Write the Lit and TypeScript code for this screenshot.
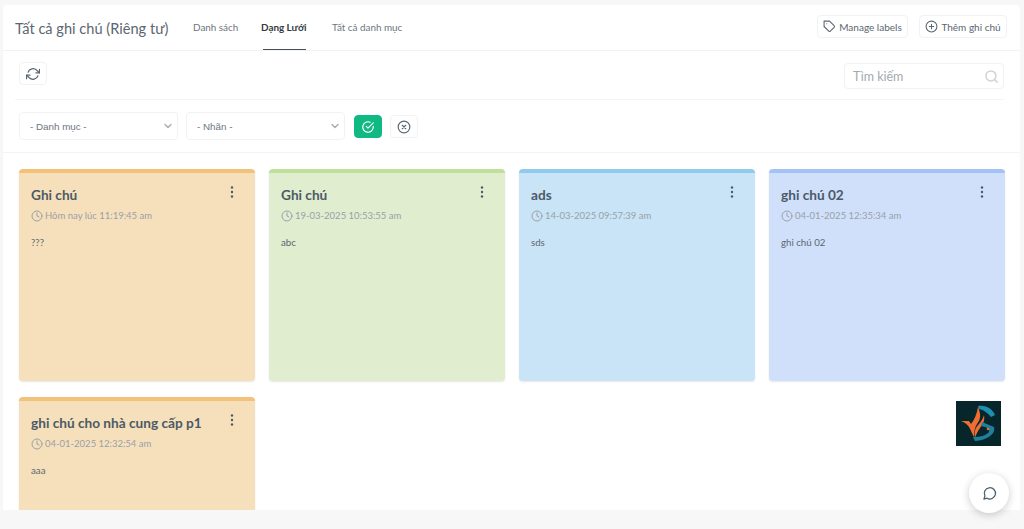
import { LitElement, html, css } from "lit";
import { customElement } from "lit/decorators.js";

const notes = [
  { t: "Ghi chú", d: "Hôm nay lúc 11:19:45 am", b: "???", c: "orange" },
  { t: "Ghi chú", d: "19-03-2025 10:53:55 am", b: "abc", c: "green" },
  { t: "ads", d: "14-03-2025 09:57:39 am", b: "sds", c: "sky" },
  { t: "ghi chú 02", d: "04-01-2025 12:35:34 am", b: "ghi chú 02", c: "blue" },
  { t: "ghi chú cho nhà cung cấp p1", d: "04-01-2025 12:32:54 am", b: "aaa", c: "orange" },
];

const clock = html`<svg class="clock" viewBox="0 0 24 24" fill="none" stroke="currentColor" stroke-width="2" stroke-linecap="round" stroke-linejoin="round"><circle cx="12" cy="12" r="10"></circle><path d="M12 6v6l4 2"></path></svg>`;
const chevron = html`<svg class="chev" viewBox="0 0 12 12" fill="none" stroke="#a3a9af" stroke-width="1.3" stroke-linecap="round" stroke-linejoin="round"><path d="M3 4.5 6 7.5l3-3"></path></svg>`;

@customElement("app-root")
export class AppRoot extends LitElement {
  static styles = css`
    :host { display: block; height: 529px; background: #f7f7f8; padding: 5px 4px 0 3px; box-sizing: border-box; overflow: hidden; position: relative; font-family: Lato, "Noto Sans", sans-serif; color: #495057; }
    .panel { background: #fff; height: 505px; overflow: hidden; border-radius: 4px 4px 0 0; }
    .head { height: 45px; box-sizing: content-box; border-bottom: 1px solid #f1f2f3; display: flex; align-items: stretch; padding: 0 13px 0 12px; }
    .title { font-size: 14.6px; line-height: 20px; color: #5b6670; margin-top: 14px; width: 166px; white-space: nowrap; }
    .tabs { display: flex; margin-left: 12px; }
    .tab { font-size: 9.9px; color: #6c757d; line-height: 14px; padding-top: 15px; height: 45px; box-sizing: border-box; white-space: nowrap; }
    .tab.one { width: 68px; }
    .tab.two { width: 71px; }
    .tab.on span { display: block; color: #343a40; font-weight: 700; }
    .tab.on { position: relative; }
    .tab.on::after { content: ""; position: absolute; left: 2px; width: 43px; top: 44px; height: 1px; background: #495057; }
    .actions { margin-left: auto; display: flex; gap: 11px; padding-top: 10px; }
    .btn { border: 1px solid #f1f2f3; border-radius: 4px; background: #fff; display: flex; align-items: center; justify-content: center; box-sizing: border-box; color: #5b6670; }
    .act { height: 23px; font-size: 10px; gap: 3px; white-space: nowrap; }
    .act.a { width: 91px; }
    .act.b { width: 88px; }
    .act svg { width: 13px; height: 13px; }
    .bar { margin: 0 16px 0 12px; }
    .row1 { height: 49px; box-sizing: border-box; border-bottom: 1px solid #f3f4f5; display: flex; justify-content: space-between; align-items: flex-start; padding-left: 4px; }
    .refresh { width: 28px; height: 23px; margin-top: 11px; }
    .refresh svg { width: 14px; height: 14px; }
    .search { width: 160px; height: 26px; margin-top: 12px; border: 1px solid #f1f2f3; border-radius: 4px; box-sizing: border-box; display: flex; align-items: center; justify-content: space-between; padding: 0 4px 0 8px; font-size: 12.5px; color: #a3a9af; }
    .search svg { width: 15px; height: 15px; }
    .row2 { height: 53px; box-sizing: border-box; border-bottom: 1px solid #f3f4f5; display: flex; align-items: flex-start; padding: 12px 0 0 16px; gap: 8px; }
    .select { width: 159px; height: 28px; border: 1px solid #f1f2f3; border-radius: 4px; box-sizing: border-box; display: flex; align-items: center; justify-content: space-between; padding: 0 3px 0 10px; font-size: 9.8px; color: #6c757d; font-family: "Liberation Sans", sans-serif; }
    .chev { width: 12px; height: 12px; }
    .ok, .cancel { width: 28px; height: 23px; margin-top: 3px; }
    .ok { background: #10b981; border-color: #10b981; color: #fff; margin-left: 1px; }
    .cancel { color: #5b6670; }
    .ok svg, .cancel svg { width: 14px; height: 14px; }
    .grid { display: grid; grid-template-columns: repeat(4, 236px); grid-auto-rows: 212px; gap: 16px 14px; padding: 16px 0 0 16px; }
    .note { border-top: 4px solid; border-radius: 4px; box-sizing: border-box; padding: 12px 12px 0; box-shadow: 0 1px 2px rgba(0, 0, 0, 0.1); position: relative; }
    .orange { background: #f6e0bb; border-color: #f3c27a; }
    .green { background: #e0edcf; border-color: #bfe09b; }
    .sky { background: #c9e4f7; border-color: #90cbee; }
    .blue { background: #d0e0fa; border-color: #a3c3f6; }
    .nt { font-size: 13.65px; font-weight: 700; line-height: 20px; color: #4c5a67; white-space: nowrap; }
    .dots { position: absolute; top: 13px; right: 17px; width: 12px; height: 12px; }
    .date { display: flex; align-items: center; gap: 2px; font-size: 9.5px; line-height: 14px; color: #98a1a8; margin-top: 4px; white-space: nowrap; }
    .clock { width: 12px; height: 12px; }
    .body { font-size: 9.7px; line-height: 14px; color: #5b6670; margin-top: 12px; }
    .logo { position: absolute; left: 956px; top: 401px; width: 45px; height: 45px; }
    .chat { position: absolute; left: 969px; top: 473px; width: 40px; height: 40px; border-radius: 50%; background: #fff; box-shadow: 0 2px 8px rgba(0, 0, 0, 0.2); display: flex; align-items: center; justify-content: center; color: #495f6e; }
    .chat svg { width: 15px; height: 15px; }
  `;

  render() {
    return html`
      <div class="panel">
        <div class="head">
          <div class="title">Tất cả ghi chú (Riêng tư)</div>
          <div class="tabs">
            <div class="tab one">Danh sách</div>
            <div class="tab two on"><span>Dạng Lưới</span></div>
            <div class="tab">Tất cả danh mục</div>
          </div>
          <div class="actions">
            <div class="btn act a"><svg viewBox="0 0 24 24" fill="none" stroke="currentColor" stroke-width="2" stroke-linecap="round" stroke-linejoin="round"><path d="M20.6 13.4l-7.2 7.2a2 2 0 0 1-2.8 0L2 12V2h10l8.6 8.6a2 2 0 0 1 0 2.8z"></path><path d="M7 7h.01"></path></svg>Manage labels</div>
            <div class="btn act b"><svg viewBox="0 0 24 24" fill="none" stroke="currentColor" stroke-width="2" stroke-linecap="round"><circle cx="12" cy="12" r="10"></circle><path d="M12 8v8M8 12h8"></path></svg>Thêm ghi chú</div>
          </div>
        </div>
        <div class="bar">
          <div class="row1">
            <div class="btn refresh"><svg viewBox="0 0 24 24" fill="none" stroke="currentColor" stroke-width="2" stroke-linecap="round" stroke-linejoin="round"><path d="M23 4v6h-6"></path><path d="M1 20v-6h6"></path><path d="M3.5 9a9 9 0 0 1 14.9-3.4L23 10M1 14l4.6 4.4A9 9 0 0 0 20.5 15"></path></svg></div>
            <div class="search">Tìm kiếm<svg viewBox="0 0 24 24" fill="none" stroke="#ced4da" stroke-width="2.4" stroke-linecap="round"><circle cx="11" cy="11" r="8"></circle><path d="M21 21l-4.3-4.3"></path></svg></div>
          </div>
        </div>
        <div class="row2">
          <div class="select">- Danh mục -${chevron}</div>
          <div class="select">- Nhãn -${chevron}</div>
          <div class="btn ok"><svg viewBox="0 0 24 24" fill="none" stroke="currentColor" stroke-width="2" stroke-linecap="round" stroke-linejoin="round"><path d="M21 11v1a9 9 0 1 1-5.3-8.2"></path><path d="M21 5l-9 9-3-3"></path></svg></div>
          <div class="btn cancel"><svg viewBox="0 0 24 24" fill="none" stroke="currentColor" stroke-width="2" stroke-linecap="round"><circle cx="12" cy="12" r="10"></circle><path d="M15 9l-6 6M9 9l6 6"></path></svg></div>
        </div>
        <div class="grid">
          ${notes.map(
            (n) => html`<div class="note ${n.c}">
              <div class="nt">${n.t}</div>
              <svg class="dots" viewBox="0 0 12 12" fill="#4c5a67"><circle cx="6" cy="1.5" r="1.2"></circle><circle cx="6" cy="6" r="1.2"></circle><circle cx="6" cy="10.5" r="1.2"></circle></svg>
              <div class="date">${clock}${n.d}</div>
              <div class="body">${n.b}</div>
            </div>`
          )}
        </div>
      </div>
      <svg class="logo" viewBox="0 0 45 45">
        <rect width="45" height="45" fill="#06262b"></rect>
        <path d="M22 5c7-1 14 2 17 9l-4 2c-3-4-7-7-12-8z" fill="#1f8fb0"></path>
        <path d="M22 6c3 7 3 12-1 17-2 3-3 7-3 13-2-3-3-7-5-10-2-3-5-5-8-6l8 0 2 3c3-4 6-10 7-17z" fill="#ef6c33"></path>
        <path d="M28 14c1 6-1 9-4 13-2 3-4 6-5 10-1-6 0-10 4-14 2-3 4-5 5-9z" fill="#ef6c33"></path>
        <path d="M26 21l12 5c2 7-7 13-19 14l-2-4c8 0 14-2 16-5 1-3-2-5-8-6z" fill="#1f7f9c"></path>
        <circle cx="32" cy="28" r="1.3" fill="#ef6c33"></circle>
      </svg>
      <div class="chat"><svg viewBox="0 0 24 24" fill="none" stroke="currentColor" stroke-width="2" stroke-linecap="round" stroke-linejoin="round"><path d="M3 21l1.7-5A9 9 0 1 1 8 19.5z"></path></svg></div>
    `;
  }
}
